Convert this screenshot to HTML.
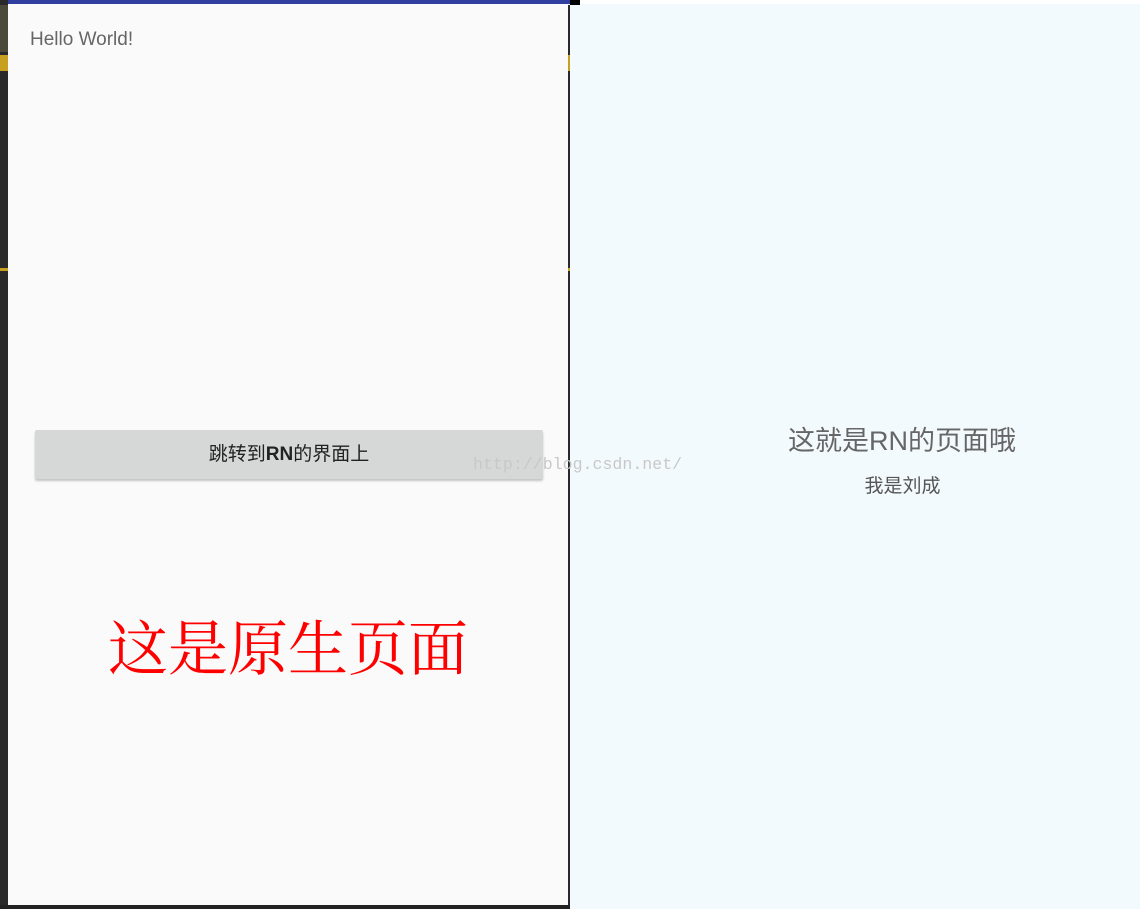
<!DOCTYPE html>
<html><head><meta charset="utf-8"><style>
*{margin:0;padding:0;box-sizing:border-box}
body{width:1140px;height:909px;position:relative;overflow:hidden;background:#f3fafe;font-family:"Liberation Sans","Noto Sans CJK SC",sans-serif}
.a{position:absolute}
</style></head><body>
<div class="a" style="left:0;top:0;width:8px;height:909px;background:#2a2a2a"></div>
<div class="a" style="left:0;top:5px;width:8px;height:47px;background:#4a4a38"></div>
<div class="a" style="left:0;top:55px;width:8px;height:16px;background:#c8a020"></div>
<div class="a" style="left:0;top:268px;width:8px;height:3px;background:#c8a020"></div>
<div class="a" style="left:8px;top:0;width:560px;height:909px;background:#fafafa"></div>
<div class="a" style="left:8px;top:0;width:562px;height:4px;background:#303f9f"></div>
<div class="a" style="left:570px;top:0;width:10px;height:5px;background:#000"></div>
<div class="a" style="left:580px;top:0;width:560px;height:4px;background:#fff"></div>
<div class="a" style="left:568px;top:5px;width:2px;height:904px;background:#2a2a2a"></div>
<div class="a" style="left:568px;top:55px;width:2px;height:16px;background:#c8a020"></div>
<div class="a" style="left:568px;top:268px;width:2px;height:3px;background:#c8a020"></div>
<div class="a" style="left:0;top:905px;width:570px;height:4px;background:#222"></div>
<div class="a" style="left:30px;top:29px;font-size:19px;color:#666">Hello World!</div>
<div class="a" style="left:35px;top:430px;width:508px;height:49px;background:#d6d7d7;border-radius:2px;box-shadow:0 2px 2px rgba(0,0,0,.22);text-align:center;line-height:49px;font-size:19px;color:#222">跳转到<b>RN</b>的界面上</div>
<div class="a" style="left:8px;top:612px;width:560px;text-align:center;font-family:'Liberation Serif','Noto Serif CJK SC',serif;font-size:60px;line-height:76px;color:#ff0000">这是原生页面</div>
<div class="a" style="left:473px;top:455px;font-family:'Liberation Mono',monospace;font-size:16.6px;color:#c8c8c8">http://blog.csdn.net/</div>
<div class="a" style="left:570px;top:424px;width:664px;text-align:center;font-size:27px;line-height:34px;color:#666">这就是RN的页面哦</div>
<div class="a" style="left:570px;top:475px;width:665px;text-align:center;font-size:19px;line-height:24px;color:#555">我是刘成</div>
</body></html>
